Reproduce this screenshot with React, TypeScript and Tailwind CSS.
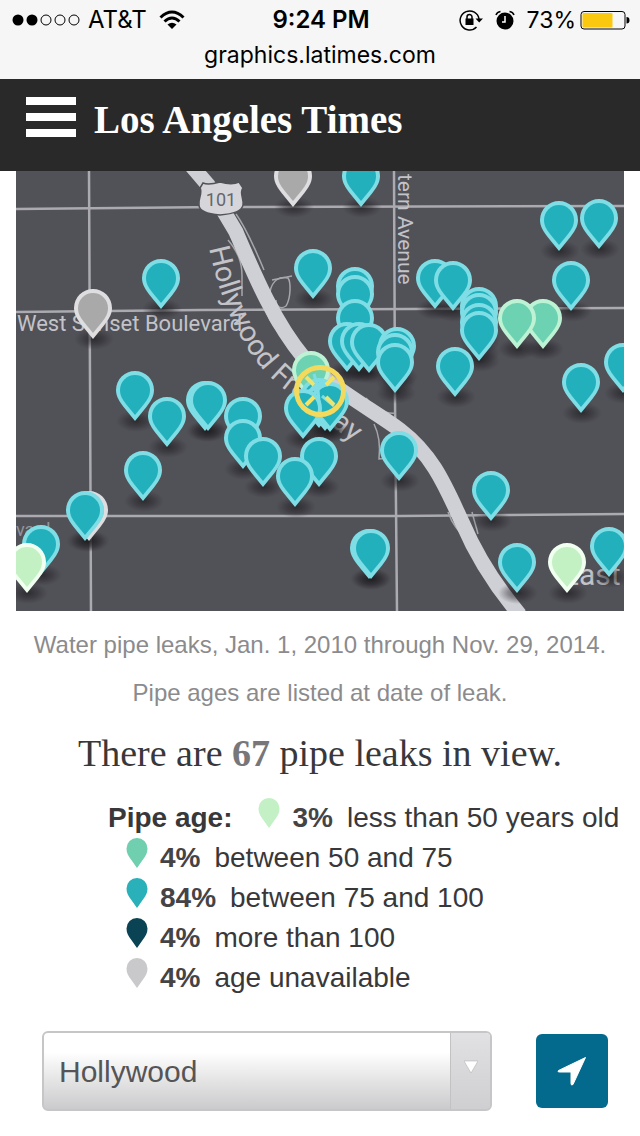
type Tone = "teal" | "green" | "light" | "gray";

const tones: Record<Tone, { fill: string; edge: string }> = {
  teal: { fill: "#22b0bd", edge: "#7fdde5" },
  green: { fill: "#6cd2b2", edge: "#bdf2d4" },
  light: { fill: "#c3f1c4", edge: "#f0fff0" },
  gray: { fill: "#a9a9aa", edge: "#dedee0" },
};

// Horizontal centre and top edge of every leak marker, back to front.
const leaks: [number, number, Tone][] = [
  [293, 157, "gray"],
  [361, 157, "teal"],
  [599, 199, "teal"],
  [559, 201, "teal"],
  [313, 249, "teal"],
  [161, 259, "teal"],
  [435, 259, "teal"],
  [453, 261, "teal"],
  [571, 261, "teal"],
  [355, 267, "teal"],
  [355, 275, "teal"],
  [479, 287, "teal"],
  [479, 293, "teal"],
  [93, 289, "gray"],
  [355, 299, "teal"],
  [543, 299, "green"],
  [517, 299, "green"],
  [479, 303, "teal"],
  [479, 311, "teal"],
  [347, 322, "teal"],
  [359, 322, "teal"],
  [369, 323, "teal"],
  [397, 327, "teal"],
  [395, 333, "teal"],
  [395, 343, "teal"],
  [623, 343, "teal"],
  [455, 347, "teal"],
  [311, 351, "green"],
  [581, 363, "teal"],
  [135, 371, "teal"],
  [205, 381, "teal"],
  [208, 381, "teal"],
  [319, 378, "teal"],
  [325, 381, "teal"],
  [330, 382, "teal"],
  [303, 389, "teal"],
  [167, 397, "teal"],
  [243, 397, "teal"],
  [243, 419, "teal"],
  [399, 431, "teal"],
  [263, 437, "teal"],
  [319, 437, "teal"],
  [143, 451, "teal"],
  [295, 457, "teal"],
  [491, 471, "teal"],
  [89, 491, "gray"],
  [85, 491, "teal"],
  [41, 525, "teal"],
  [609, 527, "teal"],
  [369, 529, "teal"],
  [371, 529, "teal"],
  [27, 543, "light"],
  [517, 543, "teal"],
  [567, 543, "light"],
];

const legend = [
  { color: "#6fcfae", share: "4%", label: "between 50 and 75" },
  { color: "#2ab0b9", share: "84%", label: "between 75 and 100" },
  { color: "#0a4354", share: "4%", label: "more than 100" },
  { color: "#c9c9cb", share: "4%", label: "age unavailable" },
];

function Marker({ x, y, tone }: { x: number; y: number; tone: Tone }) {
  const { fill, edge } = tones[tone];
  return (
    <g transform={`translate(${x} ${y})`}>
      <path
        fill={edge}
        d="M0 50L-11 36.500C-15 31-19 26-19 19A19 19 0 0 1 19 19C19 26 15 31 11 36.500Z"
      />
      <path
        fill={fill}
        d="M0 44L-9 33C-12.500 28.500-15 24.500-15 19A15 15 0 0 1 15 19C15 24.500 12.500 28.500 9 33Z"
      />
    </g>
  );
}

function LeakMap() {
  return (
    <svg
      viewBox="16 171 608 440"
      className="block h-auto w-full font-['Roboto','Liberation_Sans',sans-serif]"
      role="img"
      aria-label="Map of water pipe leaks"
    >
      <defs>
        <radialGradient id="shade">
          <stop offset="0" stopColor="#18181b" stopOpacity="0.65" />
          <stop offset="0.5" stopColor="#202024" stopOpacity="0.4" />
          <stop offset="1" stopColor="#2a2a2e" stopOpacity="0" />
        </radialGradient>
        <path id="freeway-label" d="M209 248C216 280 224 306 238 332C250 356 262 370 280 386L360 448" />
      </defs>
      <rect x="16" y="171" width="608" height="440" fill="#515158" />

      <g fill="none" stroke="#aaaab0" strokeWidth="2.5">
        <path d="M16 209L220 207L624 206" />
        <path d="M16 312L200 310L624 308" />
        <path d="M16 516H400L624 514" />
        <path d="M89 171L90 380L91 611" />
        <path d="M394 171L395 400L397 611" />
      </g>

      <g fill="none" stroke="#a6a6ad" strokeWidth="1.5">
        <path d="M236 214C246 228 254 246 264 270" />
        <path d="M228 240C238 252 242 262 242 276V296" />
        <path d="M270 292C272 280 280 276 288 278C291 282 291 298 286 306C280 310 276 306 276 300" />
        <path d="M272 280L292 276" />
        <path d="M264 300C266 318 276 334 294 346" />
        <path d="M366 398C376 410 386 414 396 413" />
        <path d="M374 424C380 436 380 450 379 459L390 458" />
        <path d="M448 512C452 524 460 534 470 542M452 512C456 524 464 532 472 538" />
        <path d="M472 512C474 520 476 526 478 534" />
      </g>
      <path
        d="M184 157L208 185L236 232C254 274 274 322 304 358C328 386 370 408 400 430C434 456 446 488 462 522C474 550 492 582 520 615"
        fill="none"
        stroke="#cfcfd6"
        strokeWidth="15"
      />

      <g fill="#c3c3c8">
        <text x="17" y="331" fontSize="22">
          West Sunset Boulevard
        </text>
        <text transform="translate(398 174) rotate(90)" fontSize="21">
          tern Avenue
        </text>
        <text x="562" y="585" fontSize="30">
          East
        </text>
        <text x="16" y="536" fontSize="18" fill="#94949a">
          vard
        </text>
        <text fontSize="29">
          <textPath href="#freeway-label">Hollywood Freeway</textPath>
        </text>
      </g>

      <path
        d="M203 183C208 185 213 184 220 182C227 184 233 185 239 182L243 188C239 193 244 198 243 205C242 211 233 214 220 215C208 214 199 211 199 205C198 198 203 193 200 188Z"
        fill="#d6d6da"
        stroke="#515158"
        strokeWidth="1.5"
      />
      <text x="221" y="206" fontSize="18" textAnchor="middle" fill="#66666c">
        101
      </text>

      {leaks.map(([x, y], i) => (
        <ellipse key={i} cx={x + 1} cy={y + 50} rx="20" ry="11" fill="url(#shade)" />
      ))}
      {leaks.map(([x, y, tone], i) => (
        <Marker key={i} x={x} y={y} tone={tone} />
      ))}

      <path
        d="M314 374L318 388L306 392M318 388L328 384M318 390L320 412M322 396L334 406"
        fill="none"
        stroke="#7fdde5"
        strokeWidth="3"
      />
      <circle cx="320" cy="391" r="23.5" fill="none" stroke="#f3d95c" strokeWidth="5" />
      <path
        d="M306 377L314 385M334 377L326 385M306 405L314 397M334 405L326 397"
        fill="none"
        stroke="#efe36a"
        strokeWidth="4"
      />
    </svg>
  );
}

function Drop({ color }: { color: string }) {
  return (
    <svg viewBox="0 0 22 30" className="h-[30px] w-[22px] shrink-0" aria-hidden="true">
      <path
        d="M11 30L5 21.500C2.500 18 .5 15 .5 10.500A10.500 10.500 0 0 1 21.500 10.500C21.500 15 19.500 18 17 21.500Z"
        fill={color}
      />
    </svg>
  );
}

function StatusBar() {
  return (
    <div className="bg-[#f6f6f6] pt-1 font-['Inter','Liberation_Sans',sans-serif] text-black">
      <div className="grid h-8 grid-cols-[1fr_auto_1fr] items-center pr-2.5 pl-3 text-2xl">
        <div className="flex items-center gap-2">
          <svg viewBox="0 0 68 12" className="h-3 w-[68px]" aria-hidden="true">
            <circle cx="6" cy="6" r="5.500" />
            <circle cx="20" cy="6" r="5.500" />
            <g fill="none" stroke="#000">
              <circle cx="34" cy="6" r="5" />
              <circle cx="48" cy="6" r="5" />
              <circle cx="62" cy="6" r="5" />
            </g>
          </svg>
          <span>AT&amp;T</span>
          <svg viewBox="0 0 26 20" className="ml-1 h-5 w-[26px]" aria-hidden="true">
            <g fill="none" stroke="#000" strokeWidth="3">
              <path d="M1.500 7.500Q13 -3.500 24.500 7.500" />
              <path d="M5.500 11.500Q13 4.500 20.500 11.500" />
            </g>
            <path d="M8.500 14.500Q13 11 17.500 14.500L13 19Z" />
          </svg>
        </div>
        <span className="font-semibold">9:24 PM</span>
        <div className="flex items-center justify-end">
          <svg viewBox="0 0 24 22" className="mr-3 h-[22px] w-6" aria-hidden="true">
            <path d="M17.500 18A9.500 9.500 0 1 1 20 10" fill="none" stroke="#000" strokeWidth="1.500" />
            <path d="M16.500 9.500H24L20.200 13.500Z" />
            <path d="M6.500 9.500H14.500V16H6.500Z" />
            <path d="M8 10V8A2.500 2.500 0 0 1 13 8V10" fill="none" stroke="#000" strokeWidth="1.500" />
          </svg>
          <svg viewBox="0 0 20 20" className="mr-3 h-5 w-5" aria-hidden="true">
            <circle cx="10" cy="11" r="8.500" />
            <path d="M1 5Q2 2 5.500 1.500M14.500 1.500Q18 2 19 5" fill="none" stroke="#000" strokeWidth="1.500" />
            <path d="M10 6V12H7" fill="none" stroke="#fff" strokeWidth="1.500" />
          </svg>
          <span className="mr-1 text-[23px]">73%</span>
          <svg viewBox="0 0 50 20" className="h-5 w-[50px]" aria-hidden="true">
            <rect x="1" y="1.500" width="44" height="17.500" rx="3" fill="none" stroke="#000" />
            <rect x="2.500" y="3" width="30" height="14.500" rx="1" fill="#fac90f" />
            <path d="M46.500 7Q49.500 7 49.500 10.300Q49.500 13.500 46.500 13.500Z" />
          </svg>
        </div>
      </div>
      <p className="pt-0.5 pb-1.5 text-center text-[23px] leading-[35px]">graphics.latimes.com</p>
    </div>
  );
}

export default function App() {
  return (
    <div className="min-h-screen bg-white font-['Liberation_Sans',Arial,sans-serif] text-[#38383a]">
      <StatusBar />
      <header className="flex h-[92px] items-center gap-[18px] bg-[#292929] px-[26px] pb-4">
        <button type="button" aria-label="Menu" className="flex w-[50px] flex-col gap-2">
          <span className="h-2 w-full bg-white" />
          <span className="h-2 w-full bg-white" />
          <span className="h-2 w-full bg-white" />
        </button>
        <a
          href="#"
          className="pt-1 font-['Liberation_Serif',serif] text-[39px] leading-none font-bold whitespace-nowrap text-white"
        >
          Los Angeles Times
        </a>
      </header>

      <main>
        <figure className="px-4">
          <LeakMap />
          <figcaption className="pt-2.5 text-center text-2xl leading-[48px] text-[#8b8b8d]">
            <p>Water pipe leaks, Jan. 1, 2010 through Nov. 29, 2014.</p>
            <p>Pipe ages are listed at date of leak.</p>
          </figcaption>
        </figure>

        <h1 className="mt-3 text-center font-['Liberation_Serif',serif] text-[38px] leading-[48px] whitespace-nowrap">
          There are <strong className="text-[#77777a]">67</strong> pipe leaks in view.
        </h1>

        <section className="mt-[21px] pl-[108px] text-[28px] leading-10">
          <div className="flex h-10 items-center whitespace-nowrap">
            <h2 className="mr-[26px] font-bold">Pipe age:</h2>
            <span className="mr-3 flex pb-2.5">
              <Drop color="#c3f0c4" />
            </span>
            <b className="mr-3.5 text-[#444446]">3%</b>
            less than 50 years old
          </div>
          <ul className="pl-[18px]">
            {legend.map(({ color, share, label }) => (
              <li key={label} className="flex h-10 items-center whitespace-nowrap">
                <span className="mr-3 flex pb-2.5">
                  <Drop color={color} />
                </span>
                <b className="mr-3.5 text-[#444446]">{share}</b>
                {label}
              </li>
            ))}
          </ul>
        </section>

        <form className="mt-[33px] flex items-center gap-11 pr-8 pb-6 pl-[42px]">
          <div className="relative flex-1">
            <select
              aria-label="Neighborhood"
              className="block h-20 w-full appearance-none rounded-md border-2 border-[#c6c6c8] bg-linear-to-b from-white from-25% to-[#cbcacc] pl-[15px] text-[30px] text-[#555557]"
            >
              <option>Hollywood</option>
            </select>
            <span className="pointer-events-none absolute inset-y-0.5 right-0.5 flex w-10 items-center justify-center rounded-r border-l border-[#c2c2c4] bg-linear-to-b from-[#e1e0e2] to-[#cfced0]">
              <svg viewBox="0 0 14 14" className="mb-2 h-3.5 w-3.5" aria-hidden="true">
                <path d="M0 1H14L7 13Z" fill="#fff" stroke="#aaa" strokeWidth=".5" />
              </svg>
            </span>
          </div>
          <button
            type="button"
            aria-label="Use my location"
            className="flex h-[74px] w-[72px] items-center justify-center rounded-md bg-[#03698d]"
          >
            <svg viewBox="0 0 30 30" className="h-[30px] w-[30px]" aria-hidden="true">
              <path
                d="M28.500 1.500L16 28.500Q14 30 14 27.500V16H2.500Q0 16 1.500 14.500Z"
                fill="#fff"
                stroke="#fff"
                strokeLinejoin="round"
              />
            </svg>
          </button>
        </form>
      </main>
    </div>
  );
}
